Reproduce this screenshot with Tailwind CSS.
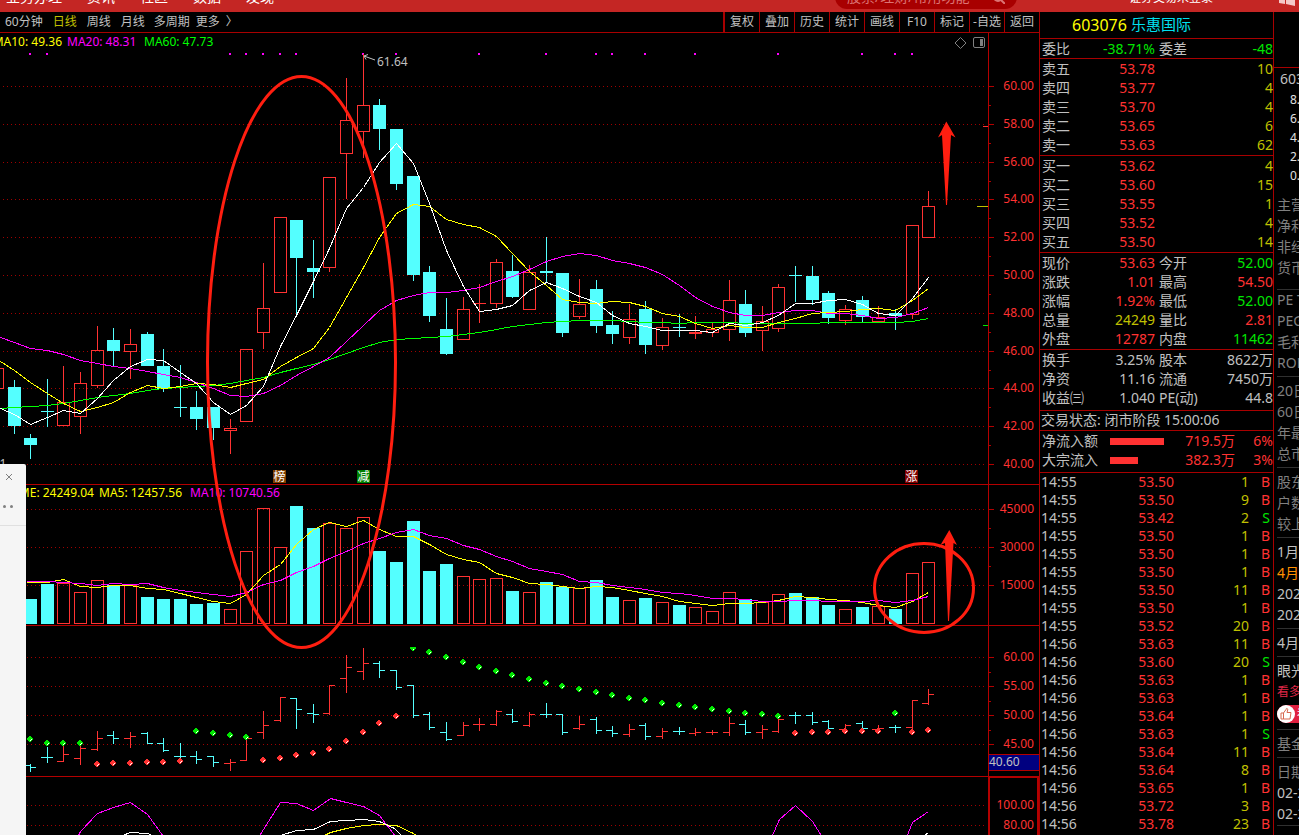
<!DOCTYPE html>
<html lang="zh-CN">
<head>
<meta charset="utf-8">
<title>603076 乐惠国际</title>
<script src="https://cdn.jsdelivr.net/npm/@tailwindcss/browser@4"></script>
</head>
<body class="flex h-screen flex-col overflow-hidden bg-black font-['Noto_Sans','Noto_Sans_CJK_SC',sans-serif] text-sm text-[#c0c0c0]">

<header class="flex h-3 shrink-0 overflow-hidden bg-[#c42624] leading-5 text-white">
  <nav class="-mt-[13px] flex h-5 flex-1 gap-[25px] pl-[6px]">
    <a href="#">业务办理</a><a href="#">资讯</a><a href="#">社区</a><a href="#">数据</a><a href="#">发现</a>
  </nav>
  <div class="-mt-[13px] flex h-[22px] w-[182px] items-start justify-between rounded-b-xl bg-[#a80000] px-3">
    <input type="text" aria-label="搜索" placeholder="股票/理财/常用功能" class="h-5 w-[136px] bg-transparent leading-5 outline-none placeholder:text-[#dc7474]">
    <svg class="mt-[5px] h-3 w-3" viewBox="0 0 12 12" fill="none" stroke="#dc7474" stroke-width="2"><circle cx="5" cy="5" r="4"/><path d="M8 8l4 4"/></svg>
  </div>
  <div class="-mt-3 flex h-5 w-[282px] justify-between pr-1 pl-28">
    <button class="h-5 text-xs leading-5 text-white">证券交易未登录</button>
    <svg class="mt-1 h-[14px] w-4" viewBox="0 0 16 14" fill="#f4c8c8"><path d="M0 0h6v12l-6-1zM7 0h9v14l-9-2z"/></svg>
  </div>
</header>

<div class="flex min-h-0 flex-1">
  <!-- chart column -->
  <main class="relative flex min-w-0 flex-1 flex-col">
    <div class="flex h-[21px] shrink-0 justify-between border-b border-[#a80000] text-xs">
      <nav class="flex items-center gap-[10px] pl-[5px]" aria-label="周期">
        <button>60分钟</button><button class="text-[#c0c000]">日线</button><button>周线</button><button>月线</button>
        <span class="-ml-px flex gap-[6px]"><button>多周期</button><button>更多</button><button>〉</button></span>
      </nav>
      <div class="flex border-l border-[#a80000] text-center">
        <button class="w-[35px] border-l border-[#a80000]">复权</button>
        <button class="w-[35px] border-l border-[#a80000]">叠加</button>
        <button class="w-[35px] border-l border-[#a80000]">历史</button>
        <button class="w-[35px] border-l border-[#a80000]">统计</button>
        <button class="w-[35px] border-l border-[#a80000]">画线</button>
        <button class="w-[35px] border-l border-[#a80000]">F10</button>
        <button class="w-[35px] border-l border-[#a80000]">标记</button>
        <button class="w-[35px] border-l border-[#a80000]">-自选</button>
        <button class="w-[35px] border-l border-[#a80000]">返回</button>
      </div>
    </div>

    <section class="flex h-[452px] shrink-0 border-b border-[#b40000]">
      <svg class="h-full min-w-0 flex-1 text-xs"><g id="price" transform="translate(0,-33)"></g></svg>
      <svg class="h-full w-[51px] border-l border-[#b40000] text-xs"><g id="axis-price" transform="translate(-989,-33)"></g></svg>
    </section>
    <section class="flex h-[141px] shrink-0 border-b border-[#b40000]">
      <svg class="h-full min-w-0 flex-1 text-xs"><g id="volume" transform="translate(0,-485)"></g></svg>
      <svg class="h-full w-[51px] border-l border-[#b40000] text-xs"><g id="axis-volume" transform="translate(-989,-485)"></g></svg>
    </section>
    <section class="flex h-[151px] shrink-0 border-b border-[#b40000]">
      <svg class="h-full min-w-0 flex-1 text-xs"><g id="sar" transform="translate(0,-626)"></g></svg>
      <div class="flex w-[51px] flex-col border-l border-[#b40000] text-xs">
        <svg class="min-h-0 flex-1"><g id="axis-sar" transform="translate(-989,-626)"></g></svg>
        <div class="mb-[5px] h-[17px] border-y border-[#b40000] bg-[#000080] leading-[14px]">40.60</div>
      </div>
    </section>
    <section class="flex min-h-0 flex-1">
      <svg class="h-full min-w-0 flex-1"><g id="osc" transform="translate(0,-777)"></g></svg>
      <svg class="h-full w-[51px] border-t border-r-2 border-l-2 border-[#b40000] text-xs"><g id="axis-osc" transform="translate(-990,-778)"></g></svg>
    </section>

    <!-- hand-drawn marks laid over the panels -->
    <svg class="pointer-events-none absolute inset-0 h-full w-full" fill="none" stroke="#ff1e10" stroke-width="3">
      <g transform="translate(0,-12)">
        <ellipse cx="301.500" cy="362" rx="94" ry="285.500"/>
        <ellipse cx="924" cy="588" rx="49.500" ry="44.500"/>
        <path fill="#ff1e10" stroke="none" d="M946.300 121.500L955.500 137.500L951 135L947 205H946L942 135L938 137.500Z"/>
        <path fill="#ff1e10" stroke="none" d="M949.300 530L957 545L953.500 543L949 621H948L945 543L940.500 545Z"/>
      </g>
    </svg>

    <!-- floating side window -->
    <aside class="absolute bottom-0 left-0 h-[371px] w-[26px] rounded-tr-xs bg-[#f5f5f5] text-[#808080]">
      <div class="flex h-[62px] flex-col border-b border-[#e0e0e0] pl-1">
        <button aria-label="关闭" class="mt-2 h-[10px] w-[10px]"><svg class="h-[10px] w-[10px]" viewBox="0 0 10 10" stroke="#808080" fill="none"><path d="M2 2l6 6M8 2l-6 6"/></svg></button>
        <button aria-label="更多选项" class="mt-[23px] -ml-[1px] flex gap-1"><span class="h-[3px] w-[3px] rounded-full bg-[#808080]"></span><span class="h-[3px] w-[3px] rounded-full bg-[#808080]"></span></button>
      </div>
    </aside>
  </main>

  <!-- quote column -->
  <section class="w-[235px] shrink-0 border-x border-[#a80000] leading-[19px]">
    <h1 class="flex h-[27px] items-center gap-1 border-b border-[#a80000] pb-px pl-8 text-base text-[#ffff00]">603076 <span class="text-[15px] text-[#00e0f0]">乐惠国际</span></h1>
    <div id="quote"></div>
    <p class="h-5 border-b border-[#a80000] pl-px leading-[17px]">交易状态: 闭市阶段 15:00:06</p>
    <table class="w-full table-fixed border-b border-[#a80000]">
      <colgroup><col class="w-[70px]"><col class="w-[54px]"><col><col class="w-[38px]"></colgroup>
      <tbody id="flows" class="text-right leading-[18px] text-[#ff3232]"></tbody>
    </table>
    <table class="w-full table-fixed leading-[18px]">
      <colgroup><col class="w-[64px]"><col class="w-[70px]"><col><col class="w-[24px]"></colgroup>
      <tbody id="trades" class="text-right"></tbody>
    </table>
  </section>

  <!-- details column, cut by the window edge -->
  <aside class="w-[25px] shrink-0 overflow-hidden whitespace-nowrap leading-[21px] text-[#808080]">
    <div class="h-14 border-b border-[#a80000]"></div>
    <div class="h-[22px] pl-[6px] leading-[22px] text-[#c0c0c0]">603076</div>
    <div class="mb-[9px] flex flex-col pl-4 text-xs leading-[19px] text-[#e0e0e0]"><span>8.00</span><span>6.00</span><span>4.00</span><span>2.00</span><span>0.00</span></div>
    <div class="pl-[3px]">
      <p>主营</p><p>净利</p><p>非经</p><p>货币</p>
      <hr class="mt-[11px] border-[#303030]">
      <p class="-mt-px">PE TTM</p><p>PEG</p><p>毛利</p><p>ROE</p>
      <hr class="mt-[3px] mb-[3px] border-[#303030]">
      <p>20日</p><p>60日</p><p>年最</p><p>总市</p>
      <hr class="mt-[3px] mb-[3px] border-[#303030]">
      <p>股东</p><p>户数</p><p>较上</p>
      <hr class="mt-[3px] mb-[3px] border-[#303030]">
      <p class="text-[#c0c0c0]">1月</p><p class="text-[#ff9000]">4月</p><p class="text-[#c0c0c0]">2021</p><p class="text-[#c0c0c0]">2020</p>
      <hr class="mt-[3px] mb-[3px] border-[#303030]">
      <p class="text-[#c0c0c0]">4月</p>
      <hr class="mt-[3px] mb-[3px] border-[#303030]">
      <p class="text-[#c0c0c0]">眼光</p>
      <p class="text-xs leading-[21px] text-[#e02848]">看多</p>
      <button aria-label="看多" class="mt-[3px] flex h-[18px] w-12 items-center rounded-l-full bg-[#e02040] text-xs text-white">
        <svg class="h-[18px] w-[18px]" viewBox="0 0 18 18"><circle cx="9" cy="9" r="9" fill="#fff"/><path d="M4 8h2.500v6H4zM6.500 8L9 4.500C9 3 11 3 10.700 5L10 7.500h4L13 14H6.500" fill="none" stroke="#d86850" stroke-linejoin="round"/></svg>
        <span class="pl-[2px]">看多</span>
      </button>
      <hr class="mt-[6px] mb-[3px] border-[#303030]">
      <p>基金</p>
      <hr class="mt-[3px] mb-[3px] border-[#303030]">
      <p>日期</p><p class="text-[#c0c0c0]">02-26</p><p class="text-[#c0c0c0]">02-25</p>
      <hr class="mt-px border-[#303030]">
    </div>
  </aside>
</div>

<script>
const RED = '#ff3232', CYAN = '#54ffff', GRID = '#a00000', MAG = '#ff00ff';
const cx = i => Math.floor(14 + 16.63 * i);
const rect = (x, y, w, h, c) => `<rect x="${x}" y="${y}" width="${w}" height="${h}" fill="${c}" shape-rendering="crispEdges"/>`;
const box = (x, y, w, h, c) => `<rect x="${x + .5}" y="${y + .5}" width="${w - 1}" height="${h - 1}" fill="none" stroke="${c}" shape-rendering="crispEdges"/>`;
const text = (x, y, s, c, anchor = 'start') => `<text x="${x}" y="${y}" fill="${c}" text-anchor="${anchor}">${s}</text>`;
const grid = ys => ys.map(y => `<line x1="3" x2="986" y1="${y + .5}" y2="${y + .5}" stroke="${GRID}" stroke-dasharray="1 3" shape-rendering="crispEdges"/>`).join('');
const poly = (pts, c) => `<polyline points="${pts.map(p => (p[0] + .5) + ',' + (p[1] + .5)).join(' ')}" fill="none" stroke="${c}" shape-rendering="crispEdges"/>`;
const series = (x0, y0, i0, ys, c) => poly([[x0, y0], ...ys.map((y, k) => [cx(i0 + k), y])], c);
const put = (id, s) => { document.getElementById(id).innerHTML = s; };

// colour, body top, body bottom, high, low
const K = [
['C',387,426,380,434],['C',438,445,434,459],['C',411,412,379,427],['R',402,426,366,426],['R',383,417,372,434],['R',350,386,326,388],['C',340,351,328,366],['R',344,352,329,379],['C',334,366,332,366],['C',366,389,349,392],
['C',407,408,365,417],['C',407,419,391,430],['C',407,428,407,440],['R',428,431,419,454],['R',349,422,349,422],['R',308,333,263,349],['R',217,293,217,293],['C',220,258,220,317],['C',268,272,240,298],['R',177,268,177,272],
['R',120,154,78,199],['R',105,132,54,158],['C',105,129,99,150],['C',129,184,129,190],['C',176,275,176,281],['C',272,316,266,322],['C',329,354,298,355],['R',309,340,297,340],['R',303,304,284,323],['R',262,304,259,308],
['C',271,297,255,298],['R',272,310,265,310],['C',271,273,237,282],['C',273,333,273,337],['R',304,317,279,319],['C',289,326,280,333],['C',325,334,311,344],['R',319,338,304,344],['C',309,345,301,354],['R',327,346,318,350],
['C',327,328,314,337],['R',332,334,316,339],['R',329,333,323,337],['R',300,330,280,341],['C',304,333,290,337],['R',321,331,306,351],['R',287,329,284,332],['C',275,276,266,302],['C',276,300,266,305],['C',293,318,291,324],
['R',309,321,305,325],['C',300,317,296,322],['R',317,322,306,322],['C',313,316,309,330],['R',225,315,225,319],['R',206,238,191,238]];

let s = grid([86,124,162,199,237,275,313,351,388,426,464]);
for (const i of [1,2,13,14,15,16,17,21,23,28,32,35,36,38,41,46,51,53,54]) s += rect(cx(i) - 1, 53, 2, 2, MAG);
s += box(-9, 368, 13, 21, RED);
K.forEach(([t, a, b, h, l], i) => {
  const x = cx(i);
  if (t === 'C') s += rect(x, h, 1, l - h, CYAN) + rect(x - 6, a, 13, b - a, CYAN);
  else {
    s += rect(x, h, 1, a - h, RED) + rect(x, b, 1, l - b, RED);
    s += b - a < 3 ? rect(x - 6, a, 13, b - a, RED) : box(x - 6, a, 13, b - a, RED);
  }
});
s += series(0,408,0,[407,406,405,403,400,397,395,393,390,388,387,386,385,383,380,377,372,368,364,359,353,347,342,339,338,337,336,334,332,329,326,324,322,321,320,320,320,321,322,322,323,322,322,322,323,323,323,323,323,322,322,322,322,322,321,318], '#00ff00');
s += series(0,337,0,[342,348,350,354,360,363,366,368,371,374,377,382,388,395,396,393,385,375,366,357,341,325,310,300,295,292,292,290,287,281,276,269,261,256,253,255,260,263,267,274,285,297,306,312,315,315,312,310,310,313,313,315,318,317,313,307], MAG);
s += series(0,361,0,[370,382,393,403,411,407,402,392,385,388,386,383,384,387,383,379,366,357,348,327,297,267,237,213,204,206,219,224,227,236,253,271,285,299,302,303,301,302,306,313,316,323,328,325,327,327,322,318,313,312,311,309,308,310,300,288], '#ffff00');
s += series(0,408,0,[414,424,417,410,413,398,380,366,359,360,372,383,402,414,405,386,346,315,281,248,208,187,162,143,163,203,250,286,311,309,305,290,282,288,296,302,315,323,326,330,330,330,332,323,325,322,315,303,303,300,299,304,313,315,298,277], '#ffffff');
s += text(62,46,'MA10: 49.36','#ffff00','end') + text(67,46,'MA20: 48.31',MAG) + text(144,46,'MA60: 47.73','#00ff00');
s += text(377,66,'61.64','#c0c0c0') + `<path d="M375 60L364 56M368 54.500L364 56L366 59.500" fill="none" stroke="#c0c0c0"/>`;
s += text(6.5,468,'38.01','#c0c0c0','end');
[[273,'#7f3f00','榜'],[357,'#008000','减'],[905,'#800000','涨']].forEach(([x, c, t]) => s += rect(x, 470, 13, 13, c) + text(x + .5, 481, t, '#ffffff'));
s += `<path d="M960.500 37.500l5.500 5.500l-5.500 5.500l-5.500 -5.500z" fill="none" stroke="#808080"/><rect x="973.500" y="37.500" width="11" height="10" rx="1.500" fill="none" stroke="#808080"/>` + rect(980,39,3,7,'#808080');
s += rect(983,126,5,1,RED) + rect(977,206,11,1,'#c0c000') + rect(983,325,5,1,'#00e600');
put('price', s);

// volume bar tops, starting with the second candle
const V = [599,584,583,592,580,585,585,597,599,599,604,603,609,551,508,547,506,528,523,528,517,551,562,521,571,564,576,579,578,591,592,582,587,588,580,597,600,598,602,605,607,611,592,599,602,594,593,597,605,609,607,606,609,573,562];
s = grid([509,547,585]);
V.forEach((y, k) => {
  const red = K[k + 1][0] === 'R', x = cx(k + 1) - 6;
  s += red ? box(x, y, 13, 624 - y, RED) : rect(x, y, 13, 624 - y, CYAN);
});
s += series(26,582,2,[582,579,586,587,585,585,588,589,593,597,601,603,594,575,564,544,529,522,526,520,529,536,536,544,554,559,562,573,577,583,584,586,588,586,587,590,593,596,601,603,605,603,603,602,600,596,597,599,600,602,605,607,601,592], '#ffff00');
s += series(26,581,2,[581,582,583,585,583,584,583,587,590,592,594,596,592,584,580,572,566,558,551,543,538,532,529,535,538,545,549,556,561,568,571,574,581,582,585,587,589,592,593,595,598,598,599,601,601,600,600,601,601,601,600,602,600,596], MAG);
s += text(94,497,'VOLUME: 24249.04','#ffff00','end') + text(99,497,'MA5: 12457.56','#ffff00') + text(190,497,'MA10: 10740.56',MAG);
put('volume', s);

// stop-and-reverse panel: bars reuse the candle prices on a smaller scale
const sy = y => Math.round(657 + (y - 86) * .3069);
s = grid([657,686,715,744]);
K.forEach(([t, a, b, h, l], i) => {
  if (!i) return;
  const x = cx(i), c = t === 'C' ? CYAN : RED, top = sy(a), bot = sy(b - 1), hi = Math.max(648, sy(h));
  s += rect(x, hi, 1, Math.max(1, sy(l) - hi + 1), c) + rect(x - 6, t === 'C' ? top : bot, 6, 1, c) + rect(x, t === 'C' ? bot : top, 6, 1, c);
});
const dot = (i, y, c) => { const x = cx(i); return rect(x-1,y-3,2,6,c) + rect(x-2,y-2,4,4,c) + rect(x-3,y-1,6,2,c) + rect(x,y+1,1,1,'#fff') + rect(x+1,y,1,1,'#fff'); };
const G = {1:739,2:743,3:743,4:743,11:731,12:733,13:735,14:737,25:652,26:657,27:662,28:667,29:671,30:675,31:679,32:683,33:686,34:689,35:692,36:695,37:698,38:700,39:703,40:705,41:707,42:709,43:711,44:713,45:714,46:716,53:713};
const R = {5:764,6:763,7:763,8:762,9:762,10:761,15:760,16:758,17:755,18:753,19:749,20:741,21:732,22:723,23:716,47:733,48:732,49:732,50:731,51:731,52:731,54:732,55:730};
for (const i in G) s += dot(+i, G[i], '#00e600');
for (const i in R) s += dot(+i, R[i], RED);
s += rect(410,647,6,2,'#00e600') + rect(411,649,4,1,'#00e600') + rect(412,650,2,1,'#00e600') + rect(413,649,1,1,'#fff');
put('sar', s);

put('osc', grid([805,825]) +
  poly([[77,837],[80,831],[97,813],[113,807],[130,802],[147,814],[163,836]], MAG) +
  poly([[258,837],[263,829],[280,802],[296,803],[313,810],[330,798],[346,802],[363,806],[379,815],[395,836]], MAG) +
  poly([[771,837],[779,819],[795,805],[812,821],[822,837]], MAG) + poly([[906,837],[912,822],[928,811]], MAG) +
  poly([[324,835],[330,832],[346,828],[363,825],[379,824],[396,825],[413,833],[418,836]], '#ffff00') +
  poly([[122,835],[130,832],[147,833],[154,836]], '#ffffff') +
  poly([[280,835],[296,830],[313,829],[330,821],[346,820],[363,819],[379,821],[394,828],[402,836]], '#ffffff') +
  poly([[923,836],[928,832]], '#ffffff'));

const axis = (id, labels, minor, x = 989) => put(id,
  labels.map(([y, t]) => rect(x, y, 5, 1, '#b40000') + text(1034, y + 4, t, '#ff3232', 'end')).join('') +
  minor.map(y => rect(x, y, 2, 1, '#b40000')).join(''));
axis('axis-price', [[86,'60.00'],[124,'58.00'],[162,'56.00'],[199,'54.00'],[237,'52.00'],[275,'50.00'],[313,'48.00'],[351,'46.00'],[388,'44.00'],[426,'42.00'],[464,'40.00']], [105,143,181,218,256,294,332,370,407,445]);
axis('axis-volume', [[509,'45000'],[547,'30000'],[585,'15000']], [528,566]);
axis('axis-sar', [[657,'60.00'],[686,'55.00'],[715,'50.00'],[744,'45.00']], [672,701,730]);
axis('axis-osc', [[805,'100.00'],[825,'80.00']], [], 980);

// quote tables; r, g, y, w pick the text colour
const tone = { r: 'text-[#ff3232]', g: 'text-[#00e600]', y: 'text-[#c0c000]', w: 'text-[#c0c0c0]' };
const cell = v => `<td class="${tone[v[0]]}">${v.slice(1)}</td>`;
const groups = [
  ['border-b border-[#a80000]', [['委比','g-38.71%','委差','g-48']]],
  ['border-b border-[#a80000] pb-px', [['卖五','r53.78','','y10'],['卖四','r53.77','','y4'],['卖三','r53.70','','y4'],['卖二','r53.65','','y6'],['卖一','r53.63','','y62']]],
  ['border-b border-[#a80000] pb-px', [['买一','r53.62','','y4'],['买二','r53.60','','y15'],['买三','r53.55','','y1'],['买四','r53.52','','y4'],['买五','r53.50','','y14']]],
  ['border-b border-[#a80000] pb-px', [['现价','r53.63','今开','g52.00'],['涨跌','r1.01','最高','r54.50'],['涨幅','r1.92%','最低','g52.00'],['总量','y24249','量比','r2.81'],['外盘','r12787','内盘','g11462']]],
  ['border-b border-[#a80000] pb-[3px]', [['换手','w3.25%','股本','w8622万'],['净资','w11.16','流通','w7450万'],['收益㈢','w1.040','PE(动)','w44.8']]]
];
put('quote', groups.map(([cls, rows]) => `<div class="${cls}"><table class="w-full table-fixed text-right"><colgroup><col class="w-[50px]"><col class="w-[65px]"><col class="w-[54px]"><col></colgroup><tbody>` +
  rows.map(r => `<tr class="h-[19px]"><th scope="row" class="pl-[2px] text-left font-normal whitespace-nowrap">${r[0]}</th>${cell(r[1])}<th scope="row" class="pl-1 text-left font-normal whitespace-nowrap">${r[2]}</th>${cell(r[3])}</tr>`).join('') + '</tbody></table></div>').join(''));

put('flows', [['净流入额',54,'719.5万','6%'],['大宗流入',28,'382.3万','3%']].map(([n, w, v, p], k) =>
  `<tr class="${k ? 'h-[21px] align-top' : 'h-5'}"><th scope="row" class="pl-[2px] text-left font-normal text-[#c0c0c0]">${n}</th><td class="py-[6px]"><div class="h-[7px] bg-[#ff3232]" style="width:${w}px"></div></td><td>${v}</td><td>${p}</td></tr>`).join(''));

put('trades', `55 53.50 1 B,55 53.50 9 B,55 53.42 2 S,55 53.50 1 B,55 53.50 1 B,55 53.50 1 B,55 53.50 11 B,55 53.50 1 B,55 53.52 20 B,56 53.63 11 B,56 53.60 20 S,56 53.63 1 B,56 53.63 1 B,56 53.64 1 B,56 53.63 1 S,56 53.64 11 B,56 53.64 8 B,56 53.65 1 B,56 53.72 3 B,56 53.78 23 B`
  .split(',').map(l => { const [m, p, n, f] = l.split(' ');
    return `<tr class="h-[18px]"><td class="pl-px text-left">14:${m}</td><td class="text-[#ff3232]">${p}</td><td class="text-[#c0c000]">${n}</td><td class="pr-[3px] ${f === 'B' ? 'text-[#ff3232]' : 'text-[#00e600]'}">${f}</td></tr>`; }).join(''));
</script>
</body>
</html>
